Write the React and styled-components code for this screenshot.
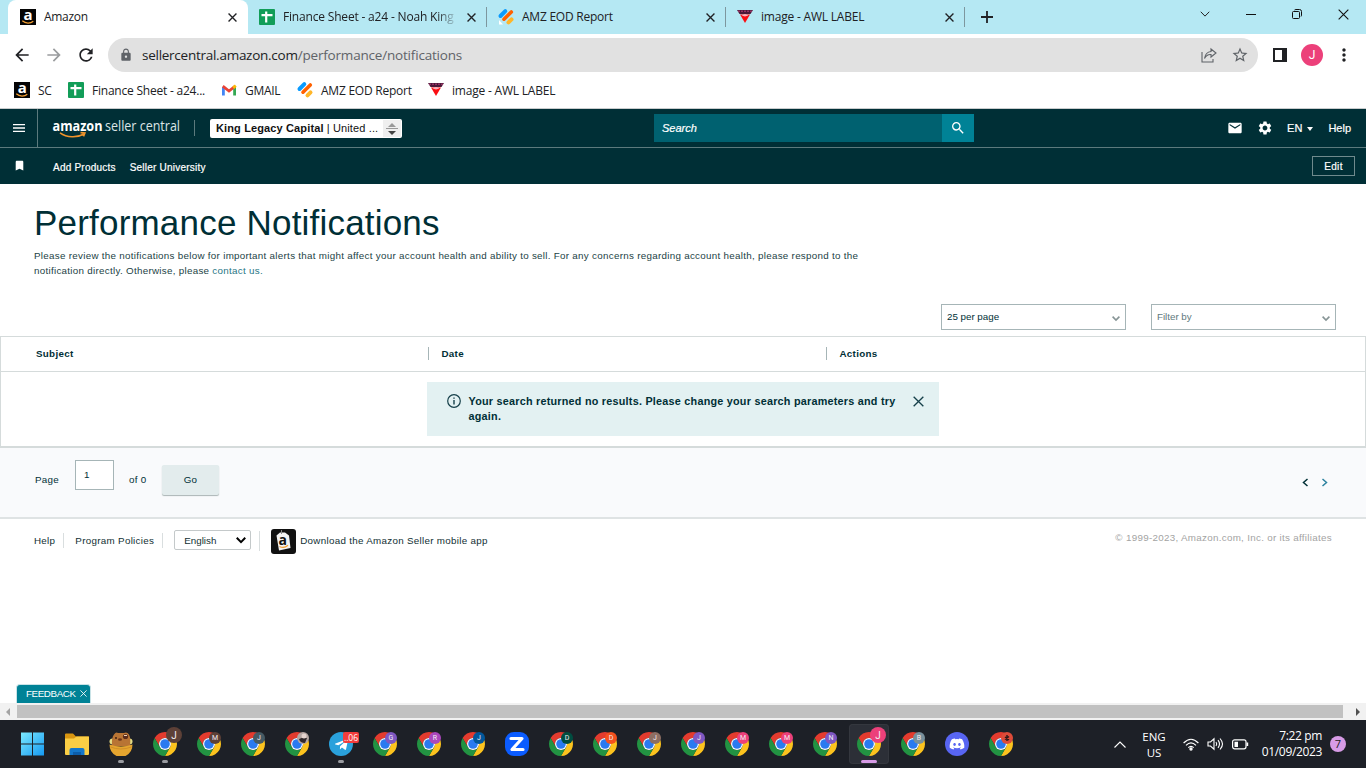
import React from 'react';
import styled, { createGlobalStyle } from 'styled-components';
import { FaDiscord, FaTelegramPlane } from 'react-icons/fa';
import {
  MdArrowBack,
  MdArrowForward,
  MdBookmark,
  MdEmail,
  MdLock,
  MdMenu,
  MdMoreVert,
  MdRefresh,
  MdSearch,
  MdSettings,
  MdStarBorder,
} from 'react-icons/md';

const GlobalStyle = createGlobalStyle`
  * {
    box-sizing: border-box;
  }

  body {
    margin: 0;
    overflow: hidden;
    font-family: 'Liberation Sans', Arial, sans-serif;
    color: #002f36;
  }

  svg {
    display: block;
    flex-shrink: 0;
    overflow: visible;
  }
`;

const Screen = styled.div`
  width: 1366px;
  height: 768px;
  display: flex;
  flex-direction: column;
  overflow: hidden;
  background: #fff;
`;

/* ---------- Browser ---------- */

const Browser = styled.header`
  flex: none;
  height: 109px;
  border-bottom: 1px solid #c9cccd;
  font-family: 'Open Sans', 'Noto Sans', sans-serif;
  font-size: 12px;
  color: #202124;
`;

const TabStrip = styled.div`
  height: 34px;
  display: flex;
  background: #b5e8f3;
  padding-left: 8px;
`;

const TabItem = styled.div`
  width: ${({ $active }) => ($active ? '240px' : '239px')};
  height: 34px;
  display: flex;
  align-items: center;
  padding: 0 11px 0 ${({ $active }) => ($active ? '12px' : '11px')};
  background: ${({ $active }) => ($active ? '#fff' : 'transparent')};
  border-radius: 8px 8px 0 0;

  .title {
    flex: 1;
    margin: -1px 9px 0 8px;
    overflow: hidden;
    white-space: nowrap;
    letter-spacing: ${({ $track }) => $track}px;
    mask-image: ${({ $fade }) =>
      $fade ? 'linear-gradient(90deg, #000 88%, transparent)' : 'none'};
  }
`;

const TabDivider = styled.i`
  width: 1px;
  height: 20px;
  margin: 7px 0 0 -1px;
  background: #7d979e;
`;

const NewTab = styled.div`
  display: flex;
  align-items: center;
  padding-left: 16px;
`;

const WindowButtons = styled.div`
  margin-left: auto;
  display: flex;
  height: 28px;

  span {
    width: 46px;
    display: flex;
    align-items: center;
    justify-content: center;
  }
`;

const Toolbar = styled.div`
  height: 42px;
  display: flex;
  align-items: center;
  padding: 0 0 0 12px;

  .nav {
    flex: none;
    display: flex;
    gap: 12px;
    width: 96px;
  }
`;

const Omnibox = styled.div`
  flex: none;
  width: 1150px;
  height: 34px;
  display: flex;
  align-items: center;
  border-radius: 17px;
  background: #e1e1e1;
  padding: 0 9px 0 11px;
  color: #5f6368;

  .url {
    flex: 1;
    margin-left: 9px;
    font-size: 13.5px;
    letter-spacing: -0.19px;
  }

  .host {
    color: #202124;
    letter-spacing: -0.26px;
  }

  .star {
    margin-left: 14px;
  }
`;

const ToolbarEnd = styled.div`
  display: flex;
  align-items: center;
  padding-left: 15px;
  gap: 14px;

  .more {
    margin-left: -3px;
  }
`;

const Profile = styled.span`
  width: 22px;
  height: 22px;
  display: flex;
  align-items: center;
  justify-content: center;
  border-radius: 50%;
  background: #ec407a;
  color: #fff;
  font: 12px Roboto, sans-serif;
`;

const Bookmarks = styled.div`
  height: 28px;
  display: flex;
  align-items: center;
  padding-left: 14px;
`;

const BookmarkItem = styled.span`
  width: ${({ $w }) => $w}px;
  display: flex;
  align-items: center;
  gap: 8px;
  white-space: nowrap;
  letter-spacing: ${({ $track }) => $track}px;
`;

/* ---------- Seller Central header ---------- */

const SiteHeader = styled.div`
  flex: none;
  height: 75px;
  background: #002f36;
  color: #fff;
  font-size: 12px;
`;

const MainBar = styled.div`
  height: 39px;
  display: flex;
  align-items: center;
  border-bottom: 1px solid #5c7a7d;
`;

const MenuCell = styled.div`
  width: 38px;
  height: 38px;
  display: flex;
  align-items: center;
  justify-content: center;
  border-right: 1px solid #5c7a7d;
`;

const Brand = styled.div`
  width: 142px;
  margin-left: 14px;
  padding-top: 2px;
`;

const BrandDivider = styled.i`
  width: 1px;
  height: 16px;
  background: #5c7a7d;
`;

const MarketPicker = styled.div`
  width: 192px;
  height: 19px;
  margin: 0 0 0 15px;
  display: flex;
  align-items: center;
  justify-content: space-between;
  border-radius: 2px;
  background: #fff;
  color: #111;
  font-size: 11px;
  padding-left: 6px;
  letter-spacing: 0.13px;
  white-space: nowrap;

  .stepper {
    width: 18px;
    height: 17px;
    margin-right: 1px;
    background: #efefef;
  }
`;

const SearchBox = styled.div`
  width: 320px;
  height: 28px;
  margin-left: 252px;
  display: flex;
  align-items: center;
  background: #006170;
  font-size: 11px;
  font-style: italic;
  padding-left: 8px;
  -webkit-text-stroke: 0.2px #fff;

  .go {
    width: 32px;
    height: 28px;
    margin-left: auto;
    display: flex;
    align-items: center;
    justify-content: center;
    background: #008296;
  }
`;

const HeaderTools = styled.div`
  display: flex;
  align-items: center;
  margin-left: auto;
  padding-right: 15px;
  font-size: 11px;
  -webkit-text-stroke: 0.2px #fff;

  .gear {
    margin: 0 14px;
  }

  .caret {
    margin: 1px 15px 0 5px;
    border: 3.5px solid transparent;
    border-top: 4px solid #fff;
    border-bottom: 0;
  }
`;

const FavoritesBar = styled.div`
  height: 36px;
  display: flex;
  align-items: center;
  padding: 0 11px 0 13px;
  font-size: 10px;
  -webkit-text-stroke: 0.2px #fff;

  .bookmark {
    margin-top: -1px;
  }

  .links {
    flex: 1;
    display: flex;
    gap: 14px;
    margin-left: 27px;
    padding-top: 2px;
    letter-spacing: 0.22px;
  }
`;

const EditButton = styled.span`
  width: 43px;
  height: 20px;
  display: flex;
  align-items: center;
  justify-content: center;
  border: 1px solid #6f8a8d;
  letter-spacing: 0.3px;
`;

/* ---------- Page ---------- */

const Page = styled.main`
  flex: 1;
  min-height: 0;
  display: flex;
  flex-direction: column;
  font-size: 9.8px;
  letter-spacing: 0.3px;
`;

const Intro = styled.section`
  height: 120px;
  padding: 16px 34px 0;

  h1 {
    margin: 0;
    font-size: 35px;
    line-height: 45px;
    font-weight: 400;
    letter-spacing: 0.2px;
  }

  p {
    margin: 3px 0 0;
    line-height: 15px;
    letter-spacing: 0.29px;
    color: #1b3f45;
    white-space: nowrap;
  }

  a {
    color: #1f7685;
  }
`;

const Filters = styled.div`
  display: flex;
  justify-content: flex-end;
  gap: 25px;
  padding-right: 30px;
  height: 32px;
`;

const SelectBox = styled.div`
  width: 185px;
  height: 26px;
  display: flex;
  align-items: center;
  justify-content: space-between;
  border: 1px solid #a6b5b7;
  padding: 0 5px 1px;
  color: ${({ $muted }) => ($muted ? '#61797d' : '#002f36')};
  letter-spacing: -0.02px;

  svg {
    margin-top: 4px;
  }
`;

const Table = styled.section`
  height: 112px;
  border: 1px solid #d5dbdb;
  border-bottom-width: 2px;
`;

const TableHead = styled.div`
  height: 35px;
  display: grid;
  grid-template-columns: 427px 398px 1fr;
  align-items: center;
  border-bottom: 1px solid #d5dbdb;
  font-weight: 700;
  padding-bottom: 2px;

  span {
    padding-left: 12.5px;
    border-left: 1px solid #a6b5b7;
    line-height: 13px;
  }

  span:first-child {
    padding-left: 34px;
    border-left-color: transparent;
  }
`;

const Alert = styled.div`
  width: 512px;
  height: 54px;
  margin: 10px 0 0 426px;
  display: flex;
  align-items: flex-start;
  background: #e3f1f2;
  padding: 12px 15px 0 20px;
  font-size: 10.8px;
  line-height: 15px;
  font-weight: 700;
  letter-spacing: 0.24px;

  p {
    margin: 0 auto 0 7.5px;
    white-space: nowrap;
  }

  .close {
    margin-top: 2px;
  }
`;

const Pager = styled.div`
  height: 71px;
  display: flex;
  align-items: flex-start;
  border-bottom: 2px solid #dfe3e4;
  background: #f9fafc;
  padding: 12px 38px 0 35px;
  line-height: 12px;

  .word {
    padding-top: 14px;
  }

  .page {
    width: 40px;
  }

  .total {
    width: 33px;
  }

  .arrows {
    display: flex;
    gap: 12px;
    margin: 18px 0 0 auto;
  }
`;

const PageInput = styled.div`
  width: 39px;
  height: 30px;
  margin-right: 15px;
  border: 1px solid #a6b5b7;
  background: #fff;
  padding: 8px;
`;

const GoButton = styled.div`
  width: 57px;
  height: 30px;
  margin-top: 5px;
  border-radius: 2px;
  background: #e3eced;
  box-shadow: 0 1px 1px #aab4b5;
  text-align: center;
  line-height: 30px;
`;

const Footer = styled.footer`
  display: flex;
  align-items: center;
  height: 43px;
  padding: 0 34px;
  color: #112f33;

  .app {
    margin-top: 1px;
  }

  .download {
    margin-left: 4px;
  }

  .copyright {
    margin: -6px 0 0 auto;
    color: #a3a3a3;
  }
`;

const FooterRule = styled.i`
  width: 1px;
  height: ${({ $tall }) => ($tall ? '20px' : '15px')};
  margin: 0 11px 0 8px;
  background: #d9dedf;
`;

const LanguageSelect = styled.div`
  width: 77px;
  height: 20px;
  margin-top: -1px;
  display: flex;
  align-items: center;
  justify-content: space-between;
  border: 1px solid #c4c9ca;
  border-radius: 2px;
  padding: 1px 4px 0 9px;
  letter-spacing: 0;
`;

const FeedbackTab = styled.div`
  width: 75px;
  height: 19px;
  margin: auto 0 0 16px;
  display: flex;
  align-items: center;
  gap: 4px;
  border: 1px solid #c9e3e7;
  border-bottom: 0;
  border-radius: 4px 4px 0 0;
  background: #008296;
  color: #fff;
  padding: 0 0 1px 9px;
  letter-spacing: -0.4px;
`;

const ScrollBar = styled.div`
  flex: none;
  height: 17px;
  display: flex;
  align-items: center;
  background: #f1f1f1;
  padding: 0 6px;

  .thumb {
    width: 1326px;
    height: 13px;
    margin: 0 13px 0 7px;
    background: #c1c1c1;
  }
`;

const ScrollArrow = styled.i`
  border: 4px solid transparent;
  border-left-width: ${({ $right }) => ($right ? '4px' : 0)};
  border-right-width: ${({ $right }) => ($right ? 0 : '4px')};
  border-left-color: #505050;
  border-right-color: #a3a3a3;
`;

/* ---------- Taskbar ---------- */

const Taskbar = styled.div`
  flex: none;
  height: 48px;
  display: flex;
  align-items: center;
  background: #1d2027;
  padding-left: 11px;
  color: #fff;
  font-family: 'Open Sans', 'Noto Sans', sans-serif;
  font-size: 12px;
`;

const AppSlot = styled.div`
  position: relative;
  width: 40px;
  height: 40px;
  margin: 0 2px;
  display: flex;
  align-items: center;
  justify-content: center;
  border-radius: 4px;
  background: ${({ $active }) => ($active ? '#2c2f37' : 'transparent')};
  box-shadow: ${({ $active }) => ($active ? 'inset 0 0 0 1px #34373e' : 'none')};

  .running {
    position: absolute;
    bottom: 1px;
    width: ${({ $active }) => ($active ? '16px' : '6px')};
    height: 3px;
    border-radius: 2px;
    background: ${({ $active }) => ($active ? '#d79be6' : '#9a9ca1')};
  }
`;

const Badge = styled.span`
  position: absolute;
  top: ${({ $big }) => ($big ? '3px' : '8px')};
  right: ${({ $big }) => ($big ? '3px' : '8px')};
  width: ${({ $big }) => ($big ? '16px' : '12px')};
  height: ${({ $big }) => ($big ? '16px' : '12px')};
  display: flex;
  align-items: center;
  justify-content: center;
  border-radius: 50%;
  background: ${({ $color }) => $color};
  color: #f3eef3;
  font: ${({ $big }) => ($big ? '10px' : '7px')} Roboto, sans-serif;
`;

const UnreadBadge = styled.span`
  position: absolute;
  top: 8px;
  right: 2px;
  width: 16px;
  height: 11px;
  border-radius: 2px;
  background: #f23c3c;
  font-size: 8.5px;
  line-height: 11px;
  text-align: center;
`;

const RoundApp = styled.span`
  width: 24px;
  height: 24px;
  display: flex;
  align-items: center;
  justify-content: center;
  border-radius: 50%;
  background: ${({ $bg }) => $bg};
`;

const Tray = styled.div`
  display: flex;
  align-items: center;
  margin-left: auto;
  padding-right: 20px;

  .language {
    width: 34px;
    margin: 1px 12px 0 11px;
    text-align: center;
    line-height: 16px;
    font-size: 11.5px;
  }

  .status {
    display: flex;
    align-items: center;
    gap: 8px;
  }

  .clock {
    width: 73px;
    text-align: right;
    line-height: 16px;
    letter-spacing: -0.35px;
    white-space: nowrap;
  }
`;

const CountBadge = styled.span`
  width: 16px;
  height: 16px;
  margin-left: 8px;
  border-radius: 50%;
  background: #d79be6;
  color: #222;
  text-align: center;
  font-size: 11px;
  line-height: 16px;
`;

/* ---------- Icons ---------- */

const AmazonIcon = () => (
  <svg width='16' height='16' viewBox='0 0 16 16'>
    <rect width='16' height='16' fill='#050505' />
    <text x='8' y='11.3' textAnchor='middle' fill='#fff' fontSize='15' fontWeight='700' fontFamily='Open Sans'>
      a
    </text>
    <path d='M2.3 11.8c3.4 3 8 3 11 .4' fill='none' stroke='#f5a032' strokeWidth='1.2' />
  </svg>
);

const SheetIcon = () => (
  <svg width='16' height='16' viewBox='0 0 16 16'>
    <rect width='16' height='16' rx='1' fill='#129d58' />
    <path d='M2.5 6.2h11M7.2 2.5v11' stroke='#fff' strokeWidth='2.2' />
  </svg>
);

const JotformIcon = () => (
  <svg width='16' height='16' viewBox='0 0 16 16' fill='none' strokeLinecap='round'>
    <path d='M2.5 7 7.3 2.2' stroke='#0a9bff' strokeWidth='4' />
    <path d='M6 10.2 13.3 3' stroke='#ff6100' strokeWidth='3.6' />
    <path d='m10.5 13.4 3-3' stroke='#ffb629' strokeWidth='4' />
    <path d='M1 11v4.5h4z' fill='#fff' />
  </svg>
);

const LabelIcon = () => (
  <svg width='16' height='16' viewBox='0 0 16 16'>
    <path d='M0 1h16l-2.5 4h-11z' fill='#4a1838' />
    <path d='M1 2.2h14' stroke='#d44a86' strokeWidth='.8' strokeDasharray='2 1' />
    <path d='M3 5.5h10L8 14z' fill='#fa0d12' />
    <path d='M4.5 6.4 8 5l3.5 1.4L8 7.5z' fill='#f8b0bb' />
  </svg>
);

const GmailIcon = () => (
  <svg width='16' height='16' viewBox='0 0 16 16' fill='none' strokeWidth='2.8'>
    <path d='M2.4 13.5V5' stroke='#4285f4' />
    <path d='M13.6 13.5V5' stroke='#34a853' />
    <path d='M1.8 4.2 8 9l6.2-4.8' stroke='#ea4335' />
    <path d='M12.2 5.8 14.8 3.7' stroke='#fbbc04' />
  </svg>
);

const Cross = ({ size = 8, color = '#202124', weight = 1.5, ...rest }) => (
  <svg width={size} height={size} viewBox='0 0 10 10' {...rest}>
    <path d='m.6.6 8.8 8.8m0-8.8L.6 9.4' stroke={color} strokeWidth={weight} />
  </svg>
);

const Chevron = ({ width = 8, color = '#879596', weight = 1.6 }) => (
  <svg width={width} height={width * 0.625} viewBox='0 0 8 5'>
    <path d='m.6.6 3.4 3.5L7.4.6' fill='none' stroke={color} strokeWidth={weight} />
  </svg>
);

const PageArrow = ({ next }) => (
  <svg width='7' height='9' viewBox='0 0 7 9'>
    <path
      d={next ? 'm1.5 1 4 3.5-4 3.5' : 'm5.5 1-4 3.5 4 3.5'}
      fill='none'
      stroke={next ? '#2c829f' : '#002f36'}
      strokeWidth='1.5'
    />
  </svg>
);

const SellerCentralLogo = () => (
  <svg width='130' height='24' viewBox='0 0 130 24' fontFamily='Open Sans, sans-serif'>
    <text x='.5' y='14' fill='#fff' fontSize='14' fontWeight='700' textLength='50' lengthAdjust='spacingAndGlyphs'>
      amazon
    </text>
    <text x='53' y='14' fill='#dce5e6' fontSize='14' textLength='75' lengthAdjust='spacingAndGlyphs'>
      seller central
    </text>
    <path d='M8 15.8c7 5 17 5.2 24 1.2M28.5 15.6l4.4.3-1.4 3.5' fill='none' stroke='#f0932b' strokeWidth='1.6' />
  </svg>
);

const SellerAppIcon = () => (
  <svg className='app' width='25' height='25' viewBox='0 0 25 25'>
    <rect width='25' height='25' rx='3' fill='#111' />
    <path d='m5.5 6.5 3.5-3h5l4 3L19.5 19 8 21.5z' fill='#f4f4f4' />
    <text x='7.4' y='15.5' fill='#111' fontSize='14' fontWeight='700' fontFamily='Open Sans'>
      a
    </text>
    <path d='M8.5 17.5c3 1.6 6 1 8.5-1.2' fill='none' stroke='#f5a032' strokeWidth='1.3' />
    <path d='M10.5 1v4' stroke='#888' />
  </svg>
);

const ChromeIcon = () => (
  <svg width='24' height='24' viewBox='0 0 48 48'>
    <path d='M24 12h20.78A24 24 0 0 0 3.22 12l10.39 18A12 12 0 0 1 24 12z' fill='#e33b2e' />
    <path d='M34.39 30 24 48a24 24 0 0 0 20.78-36H24a12 12 0 0 1 10.39 18z' fill='#fcc31e' />
    <path d='M13.61 30 3.22 12A24 24 0 0 0 24 48l10.39-18a12 12 0 0 1-20.78 0z' fill='#229342' />
    <circle cx='24' cy='24' r='12' fill='#fff' />
    <circle cx='24' cy='24' r='9.6' fill='#2a7af0' />
  </svg>
);

const WindowsIcon = () => (
  <svg width='24' height='24' viewBox='0 0 24 24'>
    <defs>
      <linearGradient id='win' x1='0' y1='0' x2='1' y2='1'>
        <stop stopColor='#7ceaff' />
        <stop offset='1' stopColor='#1599f2' />
      </linearGradient>
    </defs>
    <path d='M0 .5h11v11H0zM12 .5h11v11H12zM0 12.500h11v11H0zM12 12.500h11v11H12z' fill='url(#win)' />
  </svg>
);

const FolderIcon = () => (
  <svg width='24' height='24' viewBox='0 0 24 24'>
    <path d='M0 2.5q0-1 1-1h7l3 3h12q1 0 1 1V22H0z' fill='#d99611' />
    <path d='M0 6.5h9l2.5-2H24V22q0 1-1 1H1q-1 0-1-1z' fill='#fbce45' />
    <path d='M4.5 23v-5q0-2 2-2h11q2 0 2 2v5z' fill='#1477ca' />
    <path d='M8 23v-3h8v3z' fill='#0c5da9' />
  </svg>
);

const BearIcon = () => (
  <svg width='24' height='24' viewBox='0 0 24 24'>
    <circle cx='3.5' cy='9.5' r='3' fill='#e3dc85' />
    <circle cx='20.5' cy='9.5' r='3' fill='#e3dc85' />
    <path d='M3 14Q2.5 5 5 2.5 7-.5 9 1h6q3-1.5 5 1.5 2 4 1 11.5z' fill='#b87434' />
    <circle cx='16.5' cy='4.5' r='2.6' fill='#5b2c1c' />
    <path d='M15 3.5h3' stroke='#efd5bb' />
    <circle cx='7' cy='6' r='.9' fill='#33170c' />
    <ellipse cx='11' cy='7.5' rx='2' ry='1.3' fill='#6a351b' />
    <path d='M.5 12.5q11.500 4 23 0 0 8-7 11.500H7.500q-7-3.500-7-11.500z' fill='#e5a52f' />
    <path d='M1.5 15q10 4 21 0' stroke='#d08e27' fill='none' />
  </svg>
);

const ZoomIcon = () => (
  <svg width='24' height='24' viewBox='0 0 24 24'>
    <rect width='24' height='24' rx='9' fill='#0b5cff' />
    <path d='M6 6.5h11L7 17.5h11' fill='none' stroke='#fff' strokeWidth='3.2' strokeLinejoin='round' strokeLinecap='round' />
  </svg>
);

const WifiIcon = () => (
  <svg width='16' height='13' viewBox='0 0 16 13' fill='none' stroke='#fff' strokeWidth='1.2'>
    <path d='M.6 5q7.4-7.5 14.8 0M3 7.4q5-5 10 0M5.3 9.6q2.7-2.6 5.4 0' />
    <circle cx='8' cy='11' r='1.1' fill='#fff' />
  </svg>
);

const SpeakerIcon = () => (
  <svg width='17' height='14' viewBox='0 0 17 14' fill='none' stroke='#fff' strokeWidth='1.1'>
    <path d='M1 5h2.5L7 1.8v10.4L3.5 9H1zM9 5q1.5 2 0 4M11 3.2q3 3.8 0 7.6M13 1.5q5 5.5 0 11' />
  </svg>
);

const BatteryIcon = () => (
  <svg width='17' height='11' viewBox='0 0 17 11'>
    <rect x='.6' y='.8' width='13.4' height='9' rx='2' fill='none' stroke='#fff' strokeWidth='1.2' />
    <path d='M2.5 2.7H6v5.200H2.500zM14.500 3.500h1.700v3.600h-1.700z' fill='#fff' />
  </svg>
);

/* ---------- Data ---------- */

const tabs = [
  { title: 'Amazon', icon: <AmazonIcon />, track: -0.3, active: true },
  { title: 'Finance Sheet - a24 - Noah King', icon: <SheetIcon />, track: -0.18, fade: true },
  { title: 'AMZ EOD Report', icon: <JotformIcon />, track: -0.24 },
  { title: 'image - AWL LABEL', icon: <LabelIcon />, track: -0.2 },
];

const bookmarks = [
  { title: 'SC', icon: <AmazonIcon />, width: 54, track: -0.4 },
  { title: 'Finance Sheet - a24...', icon: <SheetIcon />, width: 153, track: -0.22 },
  { title: 'GMAIL', icon: <GmailIcon />, width: 76, track: -0.3 },
  { title: 'AMZ EOD Report', icon: <JotformIcon />, width: 131, track: -0.24 },
  { title: 'image - AWL LABEL', icon: <LabelIcon />, width: 140, track: -0.2 },
];

const chrome = (letter, color, extra) => ({ icon: <ChromeIcon />, letter, color, ...extra });

const apps = [
  { icon: <WindowsIcon /> },
  { icon: <FolderIcon /> },
  { icon: <BearIcon />, running: true },
  chrome('J', '#5d4037', { big: true, running: true }),
  chrome('M', '#5d4037'),
  chrome('J', '#455a64'),
  chrome('', '#b5a6a2', { photo: true }),
  {
    icon: (
      <RoundApp $bg='#2aa1dc'>
        <FaTelegramPlane size={15} />
      </RoundApp>
    ),
    unread: '..06',
    running: true,
  },
  chrome('G', '#7e57c2'),
  chrome('R', '#ab47bc'),
  chrome('J', '#01579b'),
  { icon: <ZoomIcon /> },
  chrome('D', '#004d40'),
  chrome('D', '#f4511e'),
  chrome('J', '#8d6e63'),
  chrome('J', '#7e57c2'),
  chrome('M', '#ec407a'),
  chrome('M', '#ec407a'),
  chrome('N', '#7e57c2'),
  chrome('J', '#ec407a', { big: true, running: true, active: true }),
  chrome('B', '#78909c'),
  {
    icon: (
      <RoundApp $bg='#5865f2'>
        <FaDiscord size={16} />
      </RoundApp>
    ),
  },
  chrome('', '#dd4b39', { bug: true }),
];

/* ---------- Sections ---------- */

const BrowserChrome = () => (
  <Browser>
    <TabStrip>
      {tabs.map(({ title, icon, track, active, fade }, i) => (
        <React.Fragment key={title}>
          <TabItem $active={active} $track={track} $fade={fade}>
            {icon}
            <span className='title'>{title}</span>
            <Cross size={9} />
          </TabItem>
          {i > 0 && <TabDivider />}
        </React.Fragment>
      ))}
      <NewTab>
        <svg width='12' height='12' viewBox='0 0 12 12'>
          <path d='M0 6h12M6 0v12' stroke='#202124' strokeWidth='1.8' />
        </svg>
      </NewTab>
      <WindowButtons>
        <span>
          <Chevron width={10} color='#222' weight={0.8} />
        </span>
        <span>
          <svg width='10' height='2'>
            <path d='M0 1.5h10' stroke='#111' />
          </svg>
        </span>
        <span>
          <svg width='10' height='10' viewBox='0 0 10 10' fill='none' stroke='#111'>
            <rect x='.5' y='2.5' width='7' height='7' rx='1' />
            <path d='M2.5 1Q3 .5 4 .5h3.5q2 0 2 2V6q0 1-.5 1.5' />
          </svg>
        </span>
        <span>
          <Cross size={11} color='#111' weight={1} />
        </span>
      </WindowButtons>
    </TabStrip>
    <Toolbar>
      <div className='nav'>
        <MdArrowBack size={20} />
        <MdArrowForward size={20} color='#9a9c9e' />
        <MdRefresh size={20} />
      </div>
      <Omnibox>
        <MdLock size={14} />
        <span className='url'>
          <span className='host'>sellercentral.amazon.com</span>/performance/notifications
        </span>
        <svg width='16' height='15' viewBox='0 0 16 15' fill='none' stroke='#5f6368' strokeWidth='1.1'>
          <path d='M1 4v10h11v-3M10 1l5 4-5 4V6.5Q6 6 3.5 10.5 4.5 4 10 3.5z' />
        </svg>
        <MdStarBorder className='star' size={18} />
      </Omnibox>
      <ToolbarEnd>
        <svg width='14' height='14' viewBox='0 0 14 14'>
          <path d='M0 0h14v14H0zM2 2v10h7V2z' fill='#202124' fillRule='evenodd' />
        </svg>
        <Profile>J</Profile>
        <MdMoreVert className='more' size={20} />
      </ToolbarEnd>
    </Toolbar>
    <Bookmarks>
      {bookmarks.map(({ title, icon, width, track }) => (
        <BookmarkItem key={title} $w={width} $track={track}>
          {icon}
          {title}
        </BookmarkItem>
      ))}
    </Bookmarks>
  </Browser>
);

const Header = () => (
  <SiteHeader>
    <MainBar>
      <MenuCell>
        <MdMenu size={16} />
      </MenuCell>
      <Brand>
        <SellerCentralLogo />
      </Brand>
      <BrandDivider />
      <MarketPicker>
        <span>
          <b>King Legacy Capital</b> | United ...
        </span>
        <svg className='stepper' viewBox='0 0 18 17'>
          <path d='m5 7 4-4 4 4z' fill='#999' />
          <path d='M3 8.5h12' stroke='#999' />
          <path d='m5 11 4 4 4-4z' fill='#444' />
        </svg>
      </MarketPicker>
      <SearchBox>
        Search
        <span className='go'>
          <MdSearch size={16} />
        </span>
      </SearchBox>
      <HeaderTools>
        <MdEmail size={16} />
        <MdSettings className='gear' size={16} />
        EN
        <i className='caret' />
        Help
      </HeaderTools>
    </MainBar>
    <FavoritesBar>
      <MdBookmark className='bookmark' size={13} />
      <div className='links'>
        <span>Add Products</span>
        <span>Seller University</span>
      </div>
      <EditButton>Edit</EditButton>
    </FavoritesBar>
  </SiteHeader>
);

const Notifications = () => (
  <Page>
    <Intro>
      <h1>Performance Notifications</h1>
      <p>
        Please review the notifications below for important alerts that might affect your account health and
        ability to sell. For any concerns regarding account health, please respond to the
        <br />
        notification directly. Otherwise, please <a>contact us.</a>
      </p>
    </Intro>
    <Filters>
      <SelectBox>
        25 per page <Chevron />
      </SelectBox>
      <SelectBox $muted>
        Filter by <Chevron />
      </SelectBox>
    </Filters>
    <Table>
      <TableHead>
        <span>Subject</span>
        <span>Date</span>
        <span>Actions</span>
      </TableHead>
      <Alert>
        <svg width='14' height='14' viewBox='0 0 14 14'>
          <circle cx='7' cy='7' r='6.3' fill='none' stroke='#16404a' strokeWidth='1.2' />
          <path d='M7 6v4.5M7 3.5v1.3' stroke='#16404a' strokeWidth='1.4' />
        </svg>
        <p>
          Your search returned no results. Please change your search parameters and try
          <br />
          again.
        </p>
        <Cross className='close' size={11} color='#16404a' weight={1.2} />
      </Alert>
    </Table>
    <Pager>
      <span className='word page'>Page</span>
      <PageInput>1</PageInput>
      <span className='word total'>of 0</span>
      <GoButton>Go</GoButton>
      <div className='arrows'>
        <PageArrow />
        <PageArrow next />
      </div>
    </Pager>
    <Footer>
      <span>Help</span>
      <FooterRule />
      <span>Program Policies</span>
      <FooterRule />
      <LanguageSelect>
        English <Chevron width={10} color='#000' weight={1.6} />
      </LanguageSelect>
      <FooterRule $tall />
      <SellerAppIcon />
      <span className='download'>Download the Amazon Seller mobile app</span>
      <span className='copyright'>© 1999-2023, Amazon.com, Inc. or its affiliates</span>
    </Footer>
    <FeedbackTab>
      FEEDBACK <Cross size={7} color='#fff' weight={1.2} />
    </FeedbackTab>
  </Page>
);

const AppButton = ({ app }) => (
  <AppSlot $active={app.active}>
    {app.icon}
    {app.color && (
      <Badge $color={app.color} $big={app.big}>
        {app.letter}
        {app.photo && (
          <svg width='12' height='12' viewBox='0 0 12 12'>
            <path d='M2 7q4-2 8-1l-2 5q-5 0-6-4z' fill='#30282b' />
            <circle cx='7' cy='4' r='2.5' fill='#e5d4cf' />
          </svg>
        )}
        {app.bug && (
          <svg width='8' height='8' viewBox='0 0 8 8'>
            <path d='M4 1v6M2 3l4 3M6 2.5l-4 3' stroke='#30191a' strokeWidth='1.5' />
          </svg>
        )}
      </Badge>
    )}
    {app.unread && <UnreadBadge>{app.unread}</UnreadBadge>}
    {app.running && <i className='running' />}
  </AppSlot>
);

const App = () => (
  <Screen>
    <GlobalStyle />
    <BrowserChrome />
    <Header />
    <Notifications />
    <ScrollBar>
      <ScrollArrow />
      <div className='thumb' />
      <ScrollArrow $right />
    </ScrollBar>
    <Taskbar>
      {apps.map((app, i) => (
        <AppButton key={i} app={app} />
      ))}
      <Tray>
        <svg width='12' height='7' viewBox='0 0 12 7'>
          <path d='m.5 6.5L6 1l5.5 5.5' fill='none' stroke='#fff' strokeWidth='1.1' />
        </svg>
        <div className='language'>
          ENG
          <br />
          US
        </div>
        <div className='status'>
          <WifiIcon />
          <SpeakerIcon />
          <BatteryIcon />
        </div>
        <div className='clock'>
          7:22 pm
          <br />
          01/09/2023
        </div>
        <CountBadge>7</CountBadge>
      </Tray>
    </Taskbar>
  </Screen>
);

export default App;
